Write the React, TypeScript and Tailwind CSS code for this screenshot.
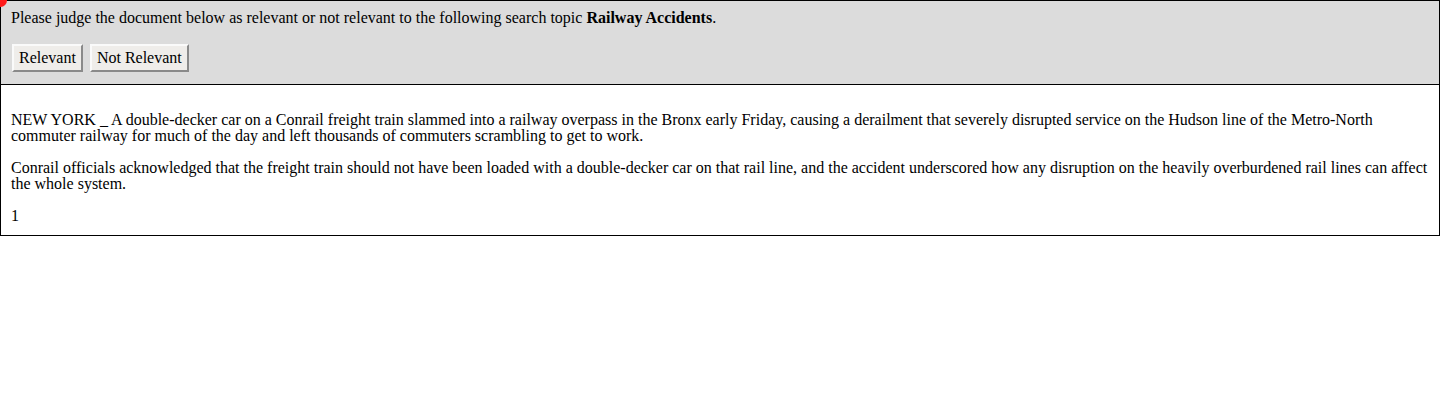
import React from 'react';

const paragraphs = [
  'NEW YORK _ A double-decker car on a Conrail freight train slammed into a railway overpass in the Bronx early Friday, causing a derailment that severely disrupted service on the Hudson line of the Metro-North commuter railway for much of the day and left thousands of commuters scrambling to get to work.',
  'Conrail officials acknowledged that the freight train should not have been loaded with a double-decker car on that rail line, and the accident underscored how any disruption on the heavily overburdened rail lines can affect the whole system.',
  '1',
];

function JudgeButton({ label }: { label: string }) {
  return (
    <button
      type="button"
      className="h-[28px] px-[5px] bg-[#efedea] border-2 border-t-[#fafafa] border-l-[#fafafa] border-b-[#8a8a8a] border-r-[#8a8a8a] text-[16px] leading-none text-black"
    >
      {label}
    </button>
  );
}

export default function App() {
  return (
    <div className="relative bg-white text-black text-[16px] leading-[16px] font-['Liberation_Serif',serif]">
      <div className="absolute -left-[6px] -top-[6px] w-[13px] h-[13px] rounded-full bg-[#ff1a1a]" />

      <div className="bg-[#dcdcdc] border border-black px-[10px] pt-[8px] pb-[12px]">
        <p className="leading-[18px]">
          Please judge the document below as relevant or not relevant to the following search topic{' '}
          <b>Railway Accidents</b>.
        </p>
        <div className="flex gap-[7px] mt-[17px] ml-[1px]">
          <JudgeButton label="Relevant" />
          <JudgeButton label="Not Relevant" />
        </div>
      </div>

      <div className="border border-t-0 border-black px-[10px] pt-[27px] pb-[11px]">
        {paragraphs.map((text, i) => (
          <p key={i} className={i > 0 ? 'mt-[16px]' : ''}>
            {text}
          </p>
        ))}
      </div>
    </div>
  );
}
